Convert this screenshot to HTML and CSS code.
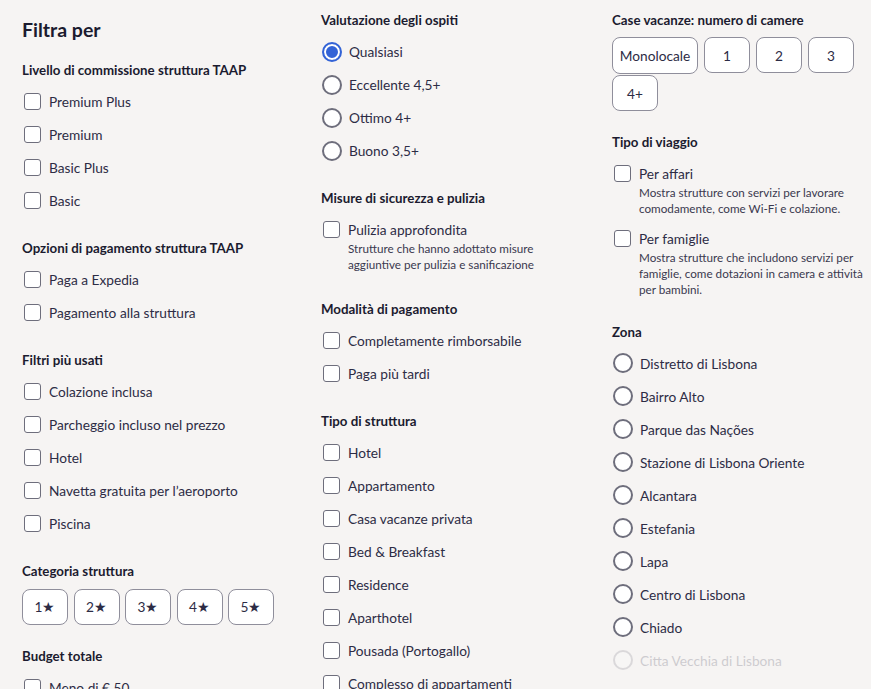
FILE: index.html
```html
<!DOCTYPE html>
<html>
<head>
    <title>Filtra per</title>
    <meta charset="UTF-8">
    <link rel="stylesheet" href="styles.css">
</head>
<body>
    <div class="filters">
        <div class="column">
            <h1 class="main-title">Filtra per</h1>

            <section class="group">
                <h2 class="group-title">Livello di commissione struttura TAAP</h2>
                <label class="option"><input type="checkbox"><span class="option-text">Premium Plus</span></label>
                <label class="option"><input type="checkbox"><span class="option-text">Premium</span></label>
                <label class="option"><input type="checkbox"><span class="option-text">Basic Plus</span></label>
                <label class="option"><input type="checkbox"><span class="option-text">Basic</span></label>
            </section>

            <section class="group">
                <h2 class="group-title">Opzioni di pagamento struttura TAAP</h2>
                <label class="option"><input type="checkbox"><span class="option-text">Paga a Expedia</span></label>
                <label class="option"><input type="checkbox"><span class="option-text">Pagamento alla struttura</span></label>
            </section>

            <section class="group">
                <h2 class="group-title">Filtri più usati</h2>
                <label class="option"><input type="checkbox"><span class="option-text">Colazione inclusa</span></label>
                <label class="option"><input type="checkbox"><span class="option-text">Parcheggio incluso nel prezzo</span></label>
                <label class="option"><input type="checkbox"><span class="option-text">Hotel</span></label>
                <label class="option"><input type="checkbox"><span class="option-text">Navetta gratuita per l’aeroporto</span></label>
                <label class="option"><input type="checkbox"><span class="option-text">Piscina</span></label>
            </section>

            <section class="group">
                <h2 class="group-title">Categoria struttura</h2>
                <div class="chips">
                    <button type="button" class="chip">1★</button>
                    <button type="button" class="chip">2★</button>
                    <button type="button" class="chip">3★</button>
                    <button type="button" class="chip">4★</button>
                    <button type="button" class="chip">5★</button>
                </div>
            </section>

            <section class="group">
                <h2 class="group-title">Budget totale</h2>
                <label class="option"><input type="checkbox"><span class="option-text">Meno di € 50</span></label>
            </section>
        </div>

        <div class="column column-middle">
            <section class="group">
                <h2 class="group-title">Valutazione degli ospiti</h2>
                <label class="option"><input type="radio" name="rating" checked><span class="option-text">Qualsiasi</span></label>
                <label class="option"><input type="radio" name="rating"><span class="option-text">Eccellente 4,5+</span></label>
                <label class="option"><input type="radio" name="rating"><span class="option-text">Ottimo 4+</span></label>
                <label class="option"><input type="radio" name="rating"><span class="option-text">Buono 3,5+</span></label>
            </section>

            <section class="group">
                <h2 class="group-title">Misure di sicurezza e pulizia</h2>
                <label class="option"><input type="checkbox"><span class="option-text">Pulizia approfondita<span class="option-desc">Strutture che hanno adottato misure aggiuntive per pulizia e sanificazione</span></span></label>
            </section>

            <section class="group">
                <h2 class="group-title">Modalità di pagamento</h2>
                <label class="option"><input type="checkbox"><span class="option-text">Completamente rimborsabile</span></label>
                <label class="option"><input type="checkbox"><span class="option-text">Paga più tardi</span></label>
            </section>

            <section class="group">
                <h2 class="group-title">Tipo di struttura</h2>
                <label class="option"><input type="checkbox"><span class="option-text">Hotel</span></label>
                <label class="option"><input type="checkbox"><span class="option-text">Appartamento</span></label>
                <label class="option"><input type="checkbox"><span class="option-text">Casa vacanze privata</span></label>
                <label class="option"><input type="checkbox"><span class="option-text">Bed &amp; Breakfast</span></label>
                <label class="option"><input type="checkbox"><span class="option-text">Residence</span></label>
                <label class="option"><input type="checkbox"><span class="option-text">Aparthotel</span></label>
                <label class="option"><input type="checkbox"><span class="option-text">Pousada (Portogallo)</span></label>
                <label class="option"><input type="checkbox"><span class="option-text">Complesso di appartamenti</span></label>
            </section>
        </div>

        <div class="column">
            <section class="group">
                <h2 class="group-title">Case vacanze: numero di camere</h2>
                <div class="chips chips-tight">
                    <button type="button" class="chip chip-wide">Monolocale</button>
                    <button type="button" class="chip">1</button>
                    <button type="button" class="chip">2</button>
                    <button type="button" class="chip">3</button>
                    <button type="button" class="chip">4+</button>
                </div>
            </section>

            <section class="group">
                <h2 class="group-title">Tipo di viaggio</h2>
                <label class="option"><input type="checkbox"><span class="option-text">Per affari<span class="option-desc">Mostra strutture con servizi per lavorare comodamente, come Wi-Fi e colazione.</span></span></label>
                <label class="option"><input type="checkbox"><span class="option-text">Per famiglie<span class="option-desc">Mostra strutture che includono servizi per famiglie, come dotazioni in camera e attività per bambini.</span></span></label>
            </section>

            <section class="group group-zone">
                <h2 class="group-title">Zona</h2>
                <label class="option"><input type="radio" name="zone"><span class="option-text">Distretto di Lisbona</span></label>
                <label class="option"><input type="radio" name="zone"><span class="option-text">Bairro Alto</span></label>
                <label class="option"><input type="radio" name="zone"><span class="option-text">Parque das Nações</span></label>
                <label class="option"><input type="radio" name="zone"><span class="option-text">Stazione di Lisbona Oriente</span></label>
                <label class="option"><input type="radio" name="zone"><span class="option-text">Alcantara</span></label>
                <label class="option"><input type="radio" name="zone"><span class="option-text">Estefania</span></label>
                <label class="option"><input type="radio" name="zone"><span class="option-text">Lapa</span></label>
                <label class="option"><input type="radio" name="zone"><span class="option-text">Centro di Lisbona</span></label>
                <label class="option"><input type="radio" name="zone"><span class="option-text">Chiado</span></label>
                <label class="option option-faded"><input type="radio" name="zone"><span class="option-text">Citta Vecchia di Lisbona</span></label>
            </section>
        </div>
    </div>
</body>
</html>
```

FILE: styles.css
```css
body {
    margin: 0;
    height: 689px;
    overflow: hidden;
    font-family: Lato, "Liberation Sans", sans-serif;
    font-size: 13.7px;
    color: #2d2c45;
    background-color: #f6f4f3;
}

.filters {
    display: grid;
    grid-template-columns: 275px 267px 1fr;
    column-gap: 24px;
    padding: 10px 0 0 22px;
}

.column {
    display: flex;
    flex-direction: column;
    min-width: 0;
}

.column-middle {
    padding-right: 10px;
}

.main-title {
    margin: 7px 0 -4px;
    font-size: 19.5px;
    line-height: 26px;
    font-weight: 700;
    color: #1b1b2f;
}

.group {
    display: flex;
    flex-direction: column;
    margin-top: 21px;
}

.column > .group:first-child {
    margin-top: 0;
}

.group-zone {
    margin-top: 18.5px;
}

.group-title {
    margin: 0 0 4px;
    font-size: 13.3px;
    line-height: 21px;
    font-weight: 700;
    color: #1b1b2f;
}

/* one row of a checkbox / radio list */
.option {
    display: flex;
    align-items: flex-start;
    gap: 8px;
    padding: 7px 0;
    cursor: pointer;
}

.option-text {
    display: flex;
    flex-direction: column;
    line-height: 19px;
}

.option-desc {
    margin: 1px 0 -1px;
    font-size: 11.7px;
    line-height: 16px;
    color: #3a394f;
}

.option input {
    appearance: none;
    -webkit-appearance: none;
    flex: none;
    margin: 0;
    background-color: #fff;
}

.option input[type="checkbox"] {
    width: 17px;
    height: 17px;
    margin: 1px 0 0 2px;
    border: 1.5px solid #6e6e7c;
    border-radius: 3px;
}

.option input[type="radio"] {
    width: 20px;
    height: 20px;
    margin: -0.5px -1px -0.5px 1px;
    border: 2px solid #6e6e7c;
    border-radius: 50%;
}

.option input[type="radio"]:checked {
    border-color: #3363d6;
    box-shadow: inset 0 0 0 2px #fff, inset 0 0 0 10px #3363d6;
}

.option-faded {
    opacity: 0.2;
}

.chips {
    display: flex;
    flex-wrap: wrap;
    gap: 1px 5.5px;
    margin-top: 2.5px;
}

.chips-tight {
    margin-top: 2px;
    gap: 1px 6px;
}

.chip {
    width: 46px;
    height: 36px;
    padding: 0;
    border: 1px solid #8f8e9b;
    border-radius: 8px;
    background-color: #fff;
    font-family: inherit;
    font-size: 13.7px;
    color: #2d2c45;
    cursor: pointer;
}

.chip-wide {
    width: 86px;
    height: 37px;
}
```
